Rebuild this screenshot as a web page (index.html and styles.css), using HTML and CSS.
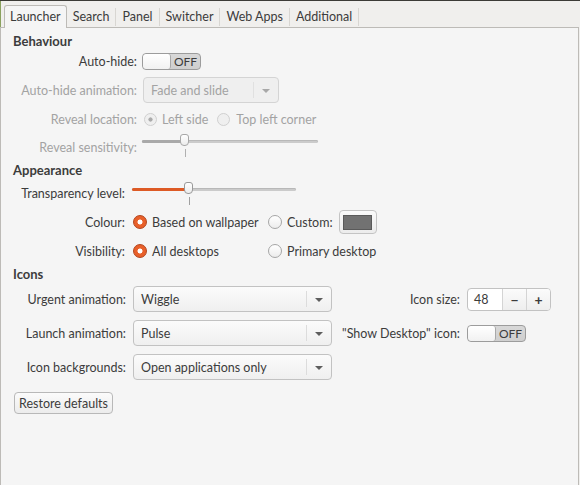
FILE: index.html
```html
<!DOCTYPE html>
<html>
<head>
<meta charset="utf-8">
<link rel="stylesheet" href="styles.css">
</head>
<body>
<div class="window">
  <div class="tabbar">
    <div class="tab active">Launcher</div>
    <div class="tab">Search</div>
    <div class="tab">Panel</div>
    <div class="tab">Switcher</div>
    <div class="tab">Web Apps</div>
    <div class="tab">Additional</div>
  </div>
  <div class="panel">
    <div class="title">Behaviour</div>
    <div class="grid behaviour">
      <div class="label">Auto-hide:</div>
      <div class="ctl"><div class="switch"><span class="knob"></span><span class="state">OFF</span></div></div>

      <div class="label dim">Auto-hide animation:</div>
      <div class="ctl"><div class="combo disabled w136"><span class="ctext">Fade and slide</span><span class="sep"></span><span class="arrow"></span></div></div>

      <div class="label dim">Reveal location:</div>
      <div class="ctl opts dim">
        <span class="radio disabled checked"></span><span class="otext">Left side</span>
        <span class="radio disabled second"></span><span class="otext">Top left corner</span>
      </div>

      <div class="label dim">Reveal sensitivity:</div>
      <div class="ctl top">
        <div class="slider w176 disabled">
          <div class="track"><div class="fill" style="width:43px"></div><div class="thumb" style="left:38px"></div></div>
          <div class="tick" style="margin-left:43px"></div>
        </div>
      </div>
    </div>

    <div class="title t2">Appearance</div>
    <div class="grid appearance">
      <div class="label">Transparency level:</div>
      <div class="ctl top span2">
        <div class="slider w164">
          <div class="track"><div class="fill orange" style="width:57px"></div><div class="thumb" style="left:52px"></div></div>
          <div class="tick" style="margin-left:57px"></div>
        </div>
      </div>

      <div class="label">Colour:</div>
      <div class="ctl opt"><span class="radio checked"></span><span class="otext">Based on wallpaper</span></div>
      <div class="ctl opt"><span class="radio"></span><span class="otext">Custom:</span><span class="colorbtn"><span class="swatch"></span></span></div>

      <div class="label">Visibility:</div>
      <div class="ctl opt"><span class="radio checked"></span><span class="otext">All desktops</span></div>
      <div class="ctl opt"><span class="radio"></span><span class="otext">Primary desktop</span></div>
    </div>

    <div class="title t3">Icons</div>
    <div class="grid icons">
      <div class="label">Urgent animation:</div>
      <div class="ctl"><div class="combo w199"><span class="ctext">Wiggle</span><span class="sep"></span><span class="arrow"></span></div></div>
      <div class="label">Icon size:</div>
      <div class="ctl"><div class="spin"><span class="val">48</span><span class="sbtn">−</span><span class="sbtn">+</span></div></div>

      <div class="label">Launch animation:</div>
      <div class="ctl"><div class="combo w199"><span class="ctext">Pulse</span><span class="sep"></span><span class="arrow"></span></div></div>
      <div class="label">"Show Desktop" icon:</div>
      <div class="ctl"><div class="switch"><span class="knob"></span><span class="state">OFF</span></div></div>

      <div class="label">Icon backgrounds:</div>
      <div class="ctl"><div class="combo w199"><span class="ctext">Open applications only</span><span class="sep"></span><span class="arrow"></span></div></div>
    </div>

    <div class="actions"><button class="btn">Restore defaults</button></div>
  </div>
</div>
</body>
</html>
```

FILE: styles.css
```css
html, body {
  margin: 0;
  padding: 0;
}
body {
  width: 580px;
  height: 485px;
  overflow: hidden;
  background: #f5f5f5;
  font-family: Lato, "Liberation Sans", sans-serif;
  font-size: 12.5px;
  color: #3c3c3c;
}
.window {
  border-top: 1px solid #3c3b37;
  height: 484px;
  background: #f0efed;
  display: flex;
  flex-direction: column;
}
.tabbar {
  display: flex;
  align-items: flex-end;
  height: 26px;
  padding-left: 3px;
  border-left: 1px solid #8aa15e;
  flex: none;
}
.tab {
  height: 18px;
  line-height: 18px;
  padding: 0 6px;
  border-right: 1px solid #d8d6d2;
  margin-bottom: 1px;
}
.tab.active {
  height: 22px;
  line-height: 22px;
  background: #f5f5f5;
  border: 1px solid #bdbbb7;
  border-bottom: none;
  border-radius: 3px 3px 0 0;
  margin-bottom: -1px;
  padding: 0 5px;
  position: relative;
  z-index: 1;
}
.panel {
  flex: 1;
  background: #f5f5f5;
  border: 1px solid #bdbbb7;
  border-bottom: none;
  margin-right: 1px;
  padding: 5px 0 0 12px;
}
.title {
  font-weight: bold;
  font-size: 13px;
  line-height: 16px;
  height: 16px;
}
.t2 { margin-top: 3px; }
.t3 { margin-top: 3px; }

.grid {
  display: grid;
  align-items: center;
}
.label {
  text-align: right;
  white-space: nowrap;
}
.dim { color: #a3a3a3; }
.ctl {
  display: flex;
  align-items: center;
  white-space: nowrap;
}
.ctl.top { align-self: start; }
.span2 { grid-column: span 2; }

.behaviour {
  grid-template-columns: 124px auto;
  grid-template-rows: 24px 26px 24px 24px;
  column-gap: 5px;
  row-gap: 4px;
}
.appearance {
  grid-template-columns: 112px 129px auto;
  grid-template-rows: 24px 24px 24px;
  column-gap: 6px;
  row-gap: 5px;
  margin-top: 3px;
}
.icons {
  grid-template-columns: 113px 199px 121px auto;
  grid-template-rows: 26px 26px 26px;
  column-gap: 7px;
  row-gap: 8px;
  margin-top: 4px;
}

/* switch */
.switch {
  display: flex;
  width: 57px;
  height: 15px;
  border: 1px solid #9c9c9c;
  border-radius: 4px;
  background: linear-gradient(#d8d8d8, #cfcfcf);
  overflow: hidden;
}
.knob {
  width: 27px;
  background: linear-gradient(#ffffff, #f1f1f1);
  border-right: 1px solid #a8a8a8;
  border-radius: 3px;
}
.state {
  flex: 1;
  text-align: center;
  font-size: 12px;
  line-height: 15px;
  color: #3c3c3c;
}

/* combo */
.combo {
  display: flex;
  align-items: center;
  height: 24px;
  border: 1px solid #c2c2c2;
  border-radius: 4px;
  background: linear-gradient(#fbfbfb, #efefef);
  box-sizing: content-box;
}
.w136 { width: 134px; margin-left: 1px; }
.w199 { width: 197px; }
.ctext {
  flex: 1;
  padding-left: 7px;
}
.sep {
  width: 1px;
  height: 16px;
  background: #dcdcdc;
}
.arrow {
  width: 0;
  height: 0;
  border-left: 4px solid transparent;
  border-right: 4px solid transparent;
  border-top: 4px solid #5e5e5e;
  margin: 2px 8px 0 8px;
}
.combo.disabled {
  background: #efefef;
  border-color: #d4d4d4;
  color: #a3a3a3;
}
.combo.disabled .arrow { border-top-color: #a8a8a8; }
.combo.disabled .sep { background: #e0e0e0; }

/* radios */
.radio {
  display: inline-block;
  box-sizing: border-box;
  width: 14px;
  height: 14px;
  border-radius: 50%;
  border: 1px solid #a6a6a6;
  background: linear-gradient(#ffffff, #ececec);
  flex: none;
}
.radio.checked {
  border-color: #b2431b;
  background: radial-gradient(circle, #ffffff 0 2.2px, #e8602a 2.8px);
}
.radio.disabled {
  width: 13px;
  height: 13px;
  border-color: #d0d0d0;
  background: #efefef;
}
.radio.disabled.checked {
  background: radial-gradient(circle, #ababab 0 1.8px, #efefef 2.4px);
}
.otext { margin-left: 5px; }
.behaviour .radio { margin-left: 2px; }
.behaviour .radio.second { margin-left: 9px; }
.behaviour .otext + .radio + .otext { margin-left: 6px; }
.appearance .opt .radio { margin-left: 2px; }
.appearance .opt .otext { margin-left: 5px; }

.colorbtn {
  display: inline-flex;
  align-items: center;
  justify-content: center;
  width: 36px;
  height: 22px;
  margin-left: 6px;
  border: 1px solid #c4c4c4;
  border-radius: 4px;
  background: linear-gradient(#fafafa, #ececec);
}
.swatch {
  width: 29px;
  height: 15px;
  background: #727272;
  border: 1px solid #5a5a5a;
  box-sizing: border-box;
}

/* slider */
.slider {
  display: flex;
  flex-direction: column;
}
.w176 { width: 176px; margin-top: 0; }
.w164 { width: 164px; margin-top: 2px; margin-left: 1px; }
.track {
  position: relative;
  height: 3px;
  margin: 5px 0 4px 0;
  background: #cbcbcb;
  border-radius: 2px;
  box-shadow: inset 0 1px 0 #b8b8b8;
}
.fill {
  height: 3px;
  border-radius: 2px;
  background: #a9a9a9;
}
.fill.orange { background: #dd5a25; }
.thumb {
  position: absolute;
  top: -6px;
  width: 9px;
  height: 12px;
  box-sizing: border-box;
  border: 1px solid #9a9a9a;
  border-radius: 3px 3px 4px 4px;
  background: linear-gradient(#ffffff, #ececec);
}
.slider.disabled .thumb { border-color: #a8a8a8; }
.tick {
  width: 1px;
  height: 8px;
  background: #a0a0a0;
  margin-top: 2px;
}
.slider.disabled .tick { background: #b0b0b0; }

/* spin */
.spin {
  display: flex;
  width: 82px;
  height: 21px;
  border: 1px solid #c2c2c2;
  border-radius: 4px;
  background: #ffffff;
  overflow: hidden;
}
.val {
  flex: 1;
  padding-left: 6px;
  line-height: 21px;
}
.sbtn {
  width: 23px;
  text-align: center;
  line-height: 21px;
  font-size: 14px;
  font-weight: bold;
  border-left: 1px solid #d4d4d4;
  background: linear-gradient(#fbfbfb, #eeeeee);
}

/* button */
.actions {
  margin-top: 12px;
}
.btn {
  font: inherit;
  color: #3c3c3c;
  height: 22px;
  padding: 0 4px;
  border: 1px solid #b8b8b8;
  border-radius: 4px;
  background: linear-gradient(#fbfbfb, #ececec);
  margin-left: 1px;
}
```
